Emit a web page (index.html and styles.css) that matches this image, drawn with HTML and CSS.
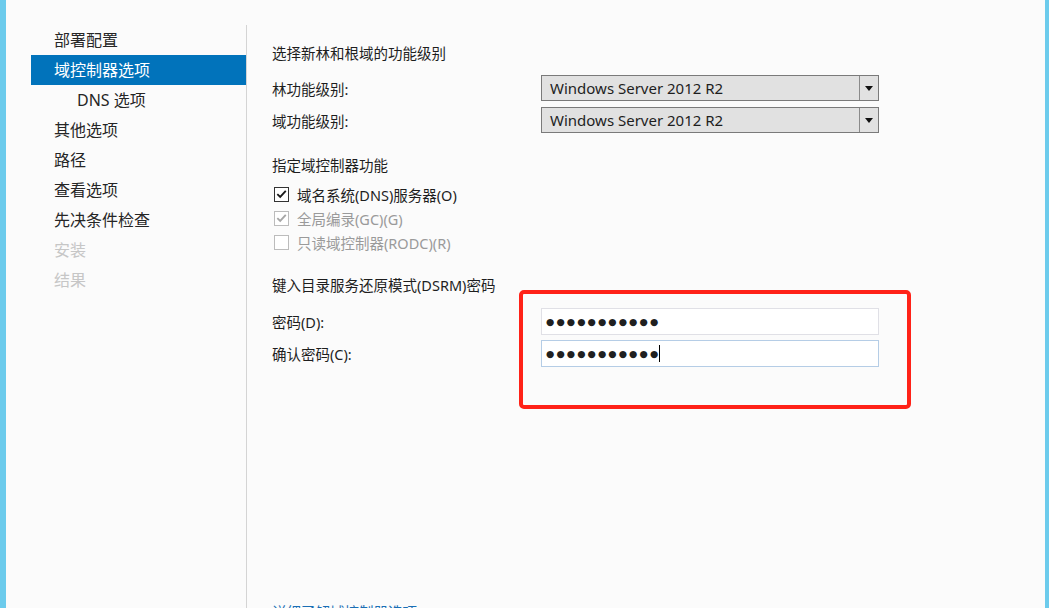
FILE: index.html
```html
<!DOCTYPE html>
<html lang="zh-CN">
<head>
<meta charset="utf-8">
<title>域控制器选项</title>
<link rel="stylesheet" href="styles.css">
</head>
<body>
<div class="frame">
  <div class="edge-left"></div>
  <nav class="sidebar">
    <ul class="nav">
      <li class="nav-item">部署配置</li>
      <li class="nav-item active">域控制器选项</li>
      <li class="nav-item sub">DNS 选项</li>
      <li class="nav-item">其他选项</li>
      <li class="nav-item">路径</li>
      <li class="nav-item">查看选项</li>
      <li class="nav-item">先决条件检查</li>
      <li class="nav-item disabled">安装</li>
      <li class="nav-item disabled">结果</li>
    </ul>
  </nav>
  <main class="content">
    <h2 class="section-title first">选择新林和根域的功能级别</h2>
    <div class="field-row">
      <label class="field-label">林功能级别:</label>
      <div class="select">
        <span class="select-value">Windows Server 2012 R2</span>
        <span class="select-btn"><span class="arrow"></span></span>
      </div>
    </div>
    <div class="field-row">
      <label class="field-label">域功能级别:</label>
      <div class="select">
        <span class="select-value">Windows Server 2012 R2</span>
        <span class="select-btn"><span class="arrow"></span></span>
      </div>
    </div>

    <h2 class="section-title second">指定域控制器功能</h2>
    <div class="checks">
      <div class="check-row">
        <span class="box"><svg viewBox="0 0 14 14" width="14" height="14"><path d="M2.5 7.2 L5.6 10.2 L11.6 3.6" fill="none" stroke="#1a1a1a" stroke-width="2"/></svg></span>
        <span class="check-label">域名系统(DNS)服务器(O)</span>
      </div>
      <div class="check-row disabled">
        <span class="box"><svg viewBox="0 0 14 14" width="14" height="14"><path d="M2.5 7.2 L5.6 10.2 L11.6 3.6" fill="none" stroke="#a6a6a6" stroke-width="2"/></svg></span>
        <span class="check-label">全局编录(GC)(G)</span>
      </div>
      <div class="check-row disabled">
        <span class="box"></span>
        <span class="check-label">只读域控制器(RODC)(R)</span>
      </div>
    </div>

    <h2 class="section-title third">键入目录服务还原模式(DSRM)密码</h2>
    <div class="pw-row">
      <label class="field-label">密码(D):</label>
      <div class="pw-input"><span class="dots">●●●●●●●●●●●</span></div>
    </div>
    <div class="pw-row">
      <label class="field-label">确认密码(C):</label>
      <div class="pw-input focused"><span class="dots">●●●●●●●●●●●</span><span class="caret"></span></div>
    </div>

    <a class="more-link">详细了解域控制器选项</a>

    <div class="highlight"></div>
  </main>
  <div class="edge-right"></div>
</div>
</body>
</html>
```
FILE: styles.css
```css
html, body {
  margin: 0;
  padding: 0;
  height: 100%;
  overflow: hidden;
}
body {
  background: #fbfbfb;
  font-family: "Noto Sans", "Noto Sans CJK SC", sans-serif;
  color: #1e1e1e;
}
.frame {
  display: flex;
  height: 608px;
}
.edge-left {
  width: 6px;
  flex: none;
  background: #6ccbec;
}
.edge-right {
  width: 4px;
  flex: none;
  background: #6ccbec;
}
.sidebar {
  width: 240px;
  flex: none;
  margin-top: 25px;
  border-right: 1px solid #d4d4d4;
}
.nav {
  list-style: none;
  margin: 0;
  padding: 0 0 0 25px;
}
.nav-item {
  height: 30px;
  line-height: 30px;
  font-size: 16px;
  padding-left: 23px;
  color: #262626;
  white-space: nowrap;
}
.nav-item.active {
  background: #0173bb;
  color: #ffffff;
}
.nav-item.sub {
  padding-left: 46px;
}
.nav-item.disabled {
  color: #c6c6c6;
}
.content {
  position: relative;
  flex: 1;
  padding-left: 25px;
  font-size: 14.5px;
}
.section-title {
  font-size: 14.5px;
  font-weight: normal;
  margin: 0;
  height: 20px;
  line-height: 20px;
  color: #1e1e1e;
}
.section-title.first { margin-top: 43px; margin-bottom: 12px; }
.section-title.second { margin-top: 22px; margin-bottom: 7px; }
.section-title.third { margin-top: 21px; margin-bottom: 13px; }
.field-row {
  display: flex;
  align-items: center;
  height: 26px;
  margin-bottom: 6px;
}
.field-label {
  width: 269px;
  flex: none;
  color: #1e1e1e;
}
.select {
  width: 336px;
  height: 24px;
  border: 1px solid #7a7a7a;
  background: #e1e1e1;
  display: flex;
  align-items: center;
  box-sizing: content-box;
}
.select-value {
  flex: 1;
  padding-left: 8px;
  font-size: 15px;
  color: #1e1e1e;
  white-space: nowrap;
}
.select-btn {
  width: 18px;
  height: 24px;
  border-left: 1px solid #8a8a8a;
  display: flex;
  align-items: center;
  justify-content: center;
}
.arrow {
  width: 0;
  height: 0;
  border-left: 4px solid transparent;
  border-right: 4px solid transparent;
  border-top: 5px solid #111;
}
.checks {
  display: flex;
  flex-direction: column;
}
.check-row {
  display: flex;
  align-items: center;
  height: 24px;
  gap: 8px;
  padding-left: 2px;
}
.box {
  width: 13px;
  height: 13px;
  border: 1px solid #333;
  background: #fff;
  display: flex;
  align-items: center;
  justify-content: center;
  flex: none;
}
.box svg { display: block; }
.check-row.disabled .box { border-color: #bcbcbc; }
.check-row.disabled .check-label { color: #9a9a9a; }
.pw-row {
  display: flex;
  align-items: center;
  height: 27px;
  margin-bottom: 5px;
}
.pw-input {
  width: 332px;
  height: 25px;
  border: 1px solid #e0e0e6;
  background: #ffffff;
  display: flex;
  align-items: center;
  padding-left: 4px;
  box-sizing: content-box;
}
.pw-input.focused {
  border-color: #b5cde6;
}
.dots {
  font-family: "DejaVu Sans", sans-serif;
  font-size: 9.5px;
  letter-spacing: 2.1px;
  color: #202020;
  white-space: nowrap;
}
.caret {
  width: 1px;
  height: 17px;
  background: #000;
  margin-left: -1px;
}
.more-link {
  display: block;
  margin-top: 235px;
  color: #1a6fb5;
  font-size: 14.5px;
  line-height: 20px;
}
.highlight {
  position: absolute;
  left: 272px;
  top: 290px;
  width: 384px;
  height: 111px;
  border: 4px solid #ff2218;
  border-radius: 5px;
}
```
